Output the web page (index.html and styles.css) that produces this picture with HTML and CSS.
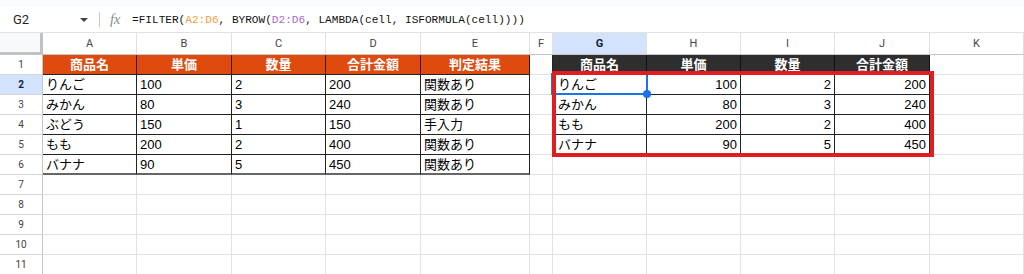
FILE: index.html
```html
<!DOCTYPE html>
<html lang="ja">
<head>
<meta charset="utf-8">
<title>Sheet</title>
<link rel="stylesheet" href="styles.css">
</head>
<body>
<div class="top"></div>
<div class="fbar">
  <div class="namebox"><span class="ref">G2</span><span class="caret"></span></div>
  <div class="sep"></div>
  <span class="fx">fx</span>
  <div class="formula">=FILTER(<span class="r1">A2:D6</span>, BYROW(<span class="r2">D2:D6</span>, LAMBDA(cell, ISFORMULA(cell))))</div>
</div>
<div class="sheet">
  <div class="grid">
    <div class="corner"></div>
    <div class="ch">A</div><div class="ch">B</div><div class="ch">C</div><div class="ch">D</div><div class="ch">E</div><div class="ch">F</div><div class="ch sel-h">G</div><div class="ch">H</div><div class="ch">I</div><div class="ch">J</div><div class="ch">K</div>

    <div class="rh">1</div>
    <div class="c h1">商品名</div><div class="c h1">単価</div><div class="c h1">数量</div><div class="c h1">合計金額</div><div class="c h1">判定結果</div>
    <div class="c fb"></div>
    <div class="c h2">商品名</div><div class="c h2">単価</div><div class="c h2">数量</div><div class="c h2">合計金額</div>
    <div class="c"></div>

    <div class="rh sel-r">2</div>
    <div class="c t">りんご</div><div class="c t">100</div><div class="c t">2</div><div class="c t">200</div><div class="c t">関数あり</div>
    <div class="c fb"></div>
    <div class="c t g">りんご</div><div class="c t n">100</div><div class="c t n">2</div><div class="c t n">200</div>
    <div class="c"></div>

    <div class="rh">3</div>
    <div class="c t">みかん</div><div class="c t">80</div><div class="c t">3</div><div class="c t">240</div><div class="c t">関数あり</div>
    <div class="c fb"></div>
    <div class="c t g">みかん</div><div class="c t n">80</div><div class="c t n">3</div><div class="c t n">240</div>
    <div class="c"></div>

    <div class="rh">4</div>
    <div class="c t">ぶどう</div><div class="c t">150</div><div class="c t">1</div><div class="c t">150</div><div class="c t">手入力</div>
    <div class="c fb"></div>
    <div class="c t g">もも</div><div class="c t n">200</div><div class="c t n">2</div><div class="c t n">400</div>
    <div class="c"></div>

    <div class="rh">5</div>
    <div class="c t">もも</div><div class="c t">200</div><div class="c t">2</div><div class="c t">400</div><div class="c t">関数あり</div>
    <div class="c fb"></div>
    <div class="c t g">バナナ</div><div class="c t n">90</div><div class="c t n">5</div><div class="c t n">450</div>
    <div class="c"></div>

    <div class="rh">6</div>
    <div class="c t b">バナナ</div><div class="c t b">90</div><div class="c t b">5</div><div class="c t b">450</div><div class="c t b">関数あり</div>
    <div class="c"></div>
    <div class="c"></div><div class="c"></div><div class="c"></div><div class="c"></div>
    <div class="c"></div>

    <div class="rh">7</div>
    <div class="c"></div><div class="c"></div><div class="c"></div><div class="c"></div><div class="c"></div><div class="c"></div><div class="c"></div><div class="c"></div><div class="c"></div><div class="c"></div><div class="c"></div>
    <div class="rh">8</div>
    <div class="c"></div><div class="c"></div><div class="c"></div><div class="c"></div><div class="c"></div><div class="c"></div><div class="c"></div><div class="c"></div><div class="c"></div><div class="c"></div><div class="c"></div>
    <div class="rh">9</div>
    <div class="c"></div><div class="c"></div><div class="c"></div><div class="c"></div><div class="c"></div><div class="c"></div><div class="c"></div><div class="c"></div><div class="c"></div><div class="c"></div><div class="c"></div>
    <div class="rh">10</div>
    <div class="c"></div><div class="c"></div><div class="c"></div><div class="c"></div><div class="c"></div><div class="c"></div><div class="c"></div><div class="c"></div><div class="c"></div><div class="c"></div><div class="c"></div>
    <div class="rh">11</div>
    <div class="c"></div><div class="c"></div><div class="c"></div><div class="c"></div><div class="c"></div><div class="c"></div><div class="c"></div><div class="c"></div><div class="c"></div><div class="c"></div><div class="c"></div>
  </div>
  <div class="selection"></div>
  <div class="handle"></div>
  <div class="redbox"></div>
</div>
</body>
</html>
```
FILE: styles.css
```css
* { box-sizing: border-box; }
html, body {
  margin: 0;
  padding: 0;
  background: #fff;
  overflow: hidden;
  height: 274px;
}
body {
  font-family: "Liberation Sans", "Noto Sans CJK JP", sans-serif;
  color: #000;
}
.top {
  height: 7px;
  background: #f9fbfd;
}
.fbar {
  height: 26px;
  display: flex;
  align-items: center;
  background: #fff;
  border-bottom: 1px solid #e1e3e1;
}
.namebox {
  width: 99px;
  display: flex;
  align-items: center;
  padding-left: 13px;
}
.ref {
  font-family: Roboto, "Liberation Sans", sans-serif;
  font-size: 13px;
  color: #1f1f1f;
  flex: 1;
}
.caret {
  width: 0;
  height: 0;
  border-left: 4px solid transparent;
  border-right: 4px solid transparent;
  border-top: 4px solid #444;
  margin-right: 11px;
}
.sep {
  width: 1px;
  height: 15px;
  background: #c7c7c7;
}
.fx {
  font-family: "Liberation Serif", serif;
  font-style: italic;
  font-size: 15px;
  color: #8e8e8e;
  margin-left: 10px;
  width: 22px;
  letter-spacing: -0.5px;
}
.formula {
  font-family: "Liberation Mono", monospace;
  font-size: 11.1px;
  color: #111;
  white-space: nowrap;
  padding-top: 1px;
}
.r1 { color: #f0a043; }
.r2 { color: #a56ac8; }

.sheet {
  position: relative;
}
.grid {
  display: grid;
  grid-template-columns: 43px 94px 95px 94px 95px 109px 23px 94px 94px 94px 95px 94px;
  grid-template-rows: 22px repeat(11, 20px);
}
.corner {
  background: #f8f9fa;
  border-right: 3px solid #c0c3c6;
  border-bottom: 3px solid #c0c3c6;
}
.ch {
  font-family: Roboto, "Liberation Sans", sans-serif;
  font-size: 11px;
  color: #444;
  text-align: center;
  line-height: 21px;
  border-right: 1px solid #e0e0e0;
  border-bottom: 1px solid #c4c7c5;
  background: #fff;
}
.ch.sel-h {
  background: #d3e3fd;
  color: #0b1f44;
  font-weight: bold;
}
.rh {
  font-family: Roboto, "Liberation Sans", sans-serif;
  font-size: 10px;
  color: #444;
  text-align: center;
  line-height: 19px;
  border-right: 1px solid #c4c7c5;
  border-bottom: 1px solid #d6d6d6;
  background: #fff;
}
.rh.sel-r {
  background: #d3e3fd;
  color: #0b1f44;
  font-weight: bold;
}
.c {
  font-size: 13px;
  line-height: 19px;
  padding: 0 3px;
  white-space: nowrap;
  overflow: hidden;
  border-right: 1px solid #e2e2e2;
  border-bottom: 1px solid #e2e2e2;
}
.c.t {
  border-right: 1px solid #222;
  border-bottom: 1px solid #222;
}
.c.t.b {
  border-bottom: 2px solid #666;
}
.c.n {
  text-align: right;
}
.c.g {
  padding-left: 5px;
}
.c.fb {
  border-right: 1px solid #222;
}
.c.h1 {
  background: #df4a0e;
  color: #fff;
  font-weight: bold;
  text-align: center;
  border-right: 1px solid #3a1a0a;
  border-bottom: 1px solid #222;
}
.c.h2 {
  background: #2e2e2e;
  color: #fff;
  font-weight: bold;
  text-align: center;
  border-right: 1px solid #111;
  border-bottom: 1px solid #111;
}
.selection {
  position: absolute;
  left: 551px;
  top: 40px;
  width: 97px;
  height: 22px;
  border: 2px solid #1a73e8;
}
.handle {
  position: absolute;
  left: 643px;
  top: 57px;
  width: 8px;
  height: 8px;
  border-radius: 50%;
  background: #1a73e8;
}
.redbox {
  position: absolute;
  left: 552px;
  top: 38px;
  width: 382px;
  height: 86px;
  border: 4px solid #e01e22;
}
```
